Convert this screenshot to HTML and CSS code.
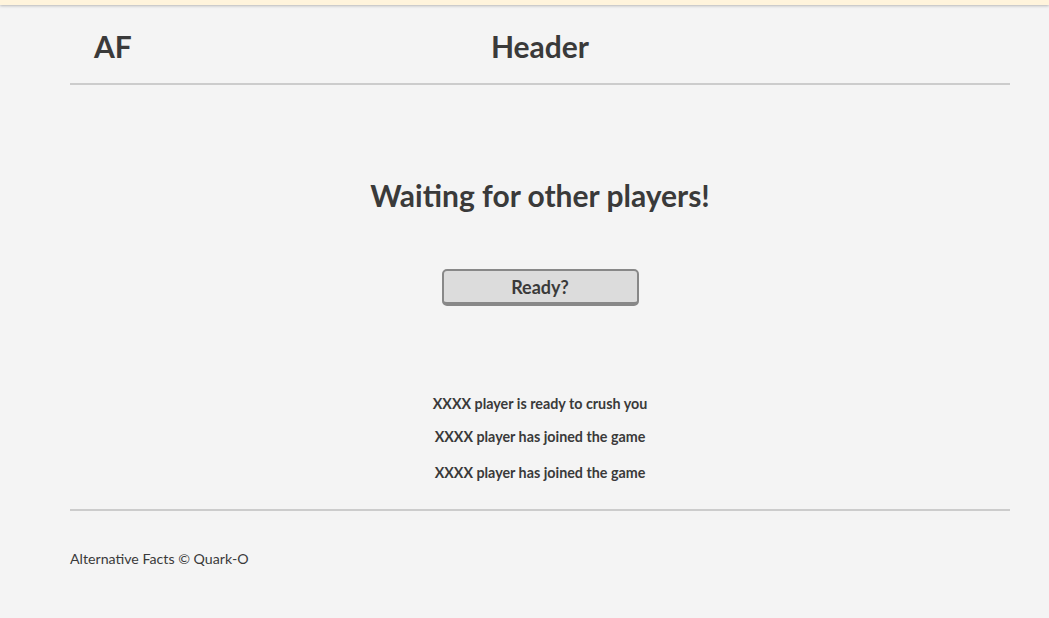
FILE: index.html
```html
<!DOCTYPE html>
<html lang="en">
<head>
<meta charset="utf-8">
<title>Alternative Facts</title>
<link rel="stylesheet" href="styles.css">
</head>
<body>
<div class="topbar"></div>
<div class="page">
  <header class="header">
    <div class="logo">AF</div>
    <div class="title">Header</div>
    <div></div>
  </header>
  <main class="main">
    <h1 class="waiting">Waiting for other players!</h1>
    <button class="ready">Ready?</button>
    <ul class="players">
      <li class="p1">XXXX player is ready to crush you</li>
      <li class="p2">XXXX player has joined the game</li>
      <li class="p3">XXXX player has joined the game</li>
    </ul>
  </main>
  <footer class="footer">Alternative Facts © Quark-O</footer>
</div>
</body>
</html>
```
FILE: styles.css
```css
html, body {
  margin: 0;
  padding: 0;
  background: #f4f4f4;
  color: #3a3a3a;
  font-family: Lato, "Open Sans", sans-serif;
}
.topbar {
  height: 5px;
  background: #fff4dc;
  box-shadow: 0 1px 3px rgba(0,0,0,0.25);
}
.page {
  width: 940px;
  margin-left: 70px;
}
.header {
  display: grid;
  grid-template-columns: 1fr auto 1fr;
  align-items: center;
  height: 75px;
  border-bottom: 2px solid #cccccc;
  font-weight: 700;
  font-size: 30px;
  padding-top: 3px;
}
.logo {
  padding-left: 24px;
}
.main {
  display: flex;
  flex-direction: column;
  align-items: center;
  border-bottom: 2px solid #cccccc;
  height: 424px;
}
.waiting {
  margin: 90px 0 0;
  font-size: 30px;
  font-weight: 700;
  line-height: 40px;
}
.ready {
  margin-top: 54px;
  width: 197px;
  height: 37px;
  background: #dcdcdc;
  border: 2px solid #888888;
  border-bottom-width: 4px;
  border-radius: 5px;
  font-family: inherit;
  font-size: 18px;
  font-weight: 700;
  color: #3a3a3a;
  padding: 0;
}
.players {
  list-style: none;
  margin: 88px 0 0;
  padding: 0;
  font-size: 14.3px;
  font-weight: 700;
  text-align: center;
}
.players li {
  line-height: 20px;
}
.p2 { margin-top: 13px; }
.p3 { margin-top: 16px; }
.footer {
  font-size: 14.2px;
  padding-top: 38px;
  line-height: 20px;
}
```
